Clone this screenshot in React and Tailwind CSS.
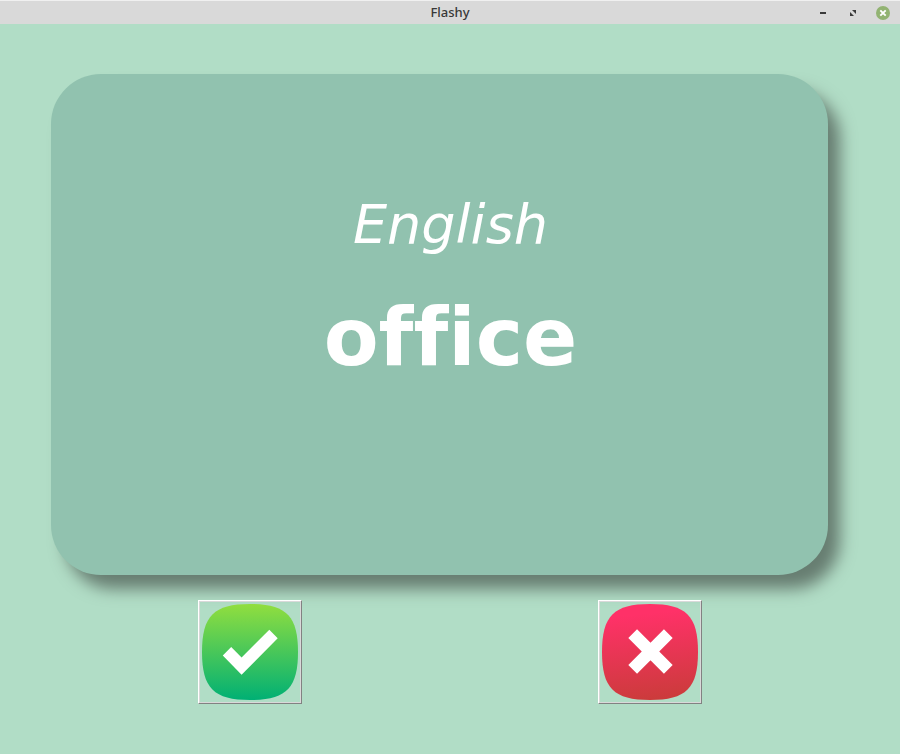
import React from "react";

function TitleBar() {
  return (
    <header className="grid h-6 grid-cols-[1fr_auto_1fr] items-center border-t border-[#f0f0f0] bg-[#d9d9d9] pr-[10px]">
      <span />
      <h1 className="pl-[10px] font-['Noto_Sans',sans-serif] text-[13px] leading-[23px] font-medium text-[#383838]">
        Flashy
      </h1>
      <div className="flex items-center justify-end gap-4 text-[#3a3a3a]">
        <button type="button" aria-label="Minimize" className="size-[14px]">
          <svg viewBox="0 0 14 14" className="size-[14px]">
            <rect x="4" y="6" width="6" height="2" fill="currentColor" />
          </svg>
        </button>
        <button type="button" aria-label="Maximize" className="size-[14px]">
          <svg viewBox="0 0 14 14" className="size-[14px]" fill="currentColor">
            <path d="M6 4h4v4z" />
            <path d="M4 6v4h4z" />
          </svg>
        </button>
        <button type="button" aria-label="Close" className="size-[14px]">
          <svg viewBox="0 0 14 14" className="size-[14px]">
            <circle cx="7" cy="7" r="7" fill="#92b372" />
            <path d="M4.300 4.300l5.400 5.400M9.700 4.300l-5.400 5.400" stroke="#fff" strokeWidth="1.9" />
          </svg>
        </button>
      </div>
    </header>
  );
}

function FlashCard({ language, word }) {
  return (
    <section className="mr-[22px] ml-px flex h-[501px] flex-col items-center gap-[33px] rounded-[50px] bg-[#91c2af] pt-[119px] pl-[22px] font-['DejaVu_Sans',sans-serif] text-white shadow-[13px_15px_16px_-1px_#677d71]">
      <p className="text-[54px] leading-[64px] italic">{language}</p>
      <p className="text-[80px] leading-[96px] font-bold [font-variant-ligatures:none]">{word}</p>
    </section>
  );
}

function AnswerButton({ label, children }) {
  return (
    <button
      type="button"
      aria-label={label}
      className="size-[104px] border border-t-white border-r-[#828282] border-b-[#828282] border-l-white"
    >
      <span className="flex size-full items-center justify-center border border-[#d9d9d9]">
        {children}
      </span>
    </button>
  );
}

const TILE = "M48.5 0C85 0 97 12 97 48.5S85 97 48.5 97 0 85 0 48.5 12 0 48.5 0z";

export default function App() {
  return (
    <div className="min-h-screen bg-[#b1ddc6]">
      <TitleBar />
      <main className="p-[50px]">
        <FlashCard language="English" word="office" />
        <div className="mt-[25px] grid grid-cols-2 justify-items-center">
          <AnswerButton label="Known">
            <svg viewBox="0 0 97 97" className="size-[96px]">
              <defs>
                <linearGradient id="green" x1="0" y1="0" x2="0" y2="1">
                  <stop offset="0" stopColor="#91de3f" />
                  <stop offset="1" stopColor="#00b074" />
                </linearGradient>
              </defs>
              <path d={TILE} fill="url(#green)" />
              <path d="M21 52l8.500-8.500L40 54 68 26l8.500 8.500L40 71.500z" fill="#fff" />
            </svg>
          </AnswerButton>
          <AnswerButton label="Unknown">
            <svg viewBox="0 0 97 97" className="size-[96px]">
              <defs>
                <linearGradient id="red" x1="0.45" y1="0" x2="0.55" y2="1">
                  <stop offset="0.1" stopColor="#ff3168" />
                  <stop offset="1" stopColor="#cb3b3b" />
                </linearGradient>
              </defs>
              <path d={TILE} fill="url(#red)" />
              <path d="M31 30l36 36M67 30L31 66" stroke="#fff" strokeWidth="12.5" />
            </svg>
          </AnswerButton>
        </div>
      </main>
    </div>
  );
}
